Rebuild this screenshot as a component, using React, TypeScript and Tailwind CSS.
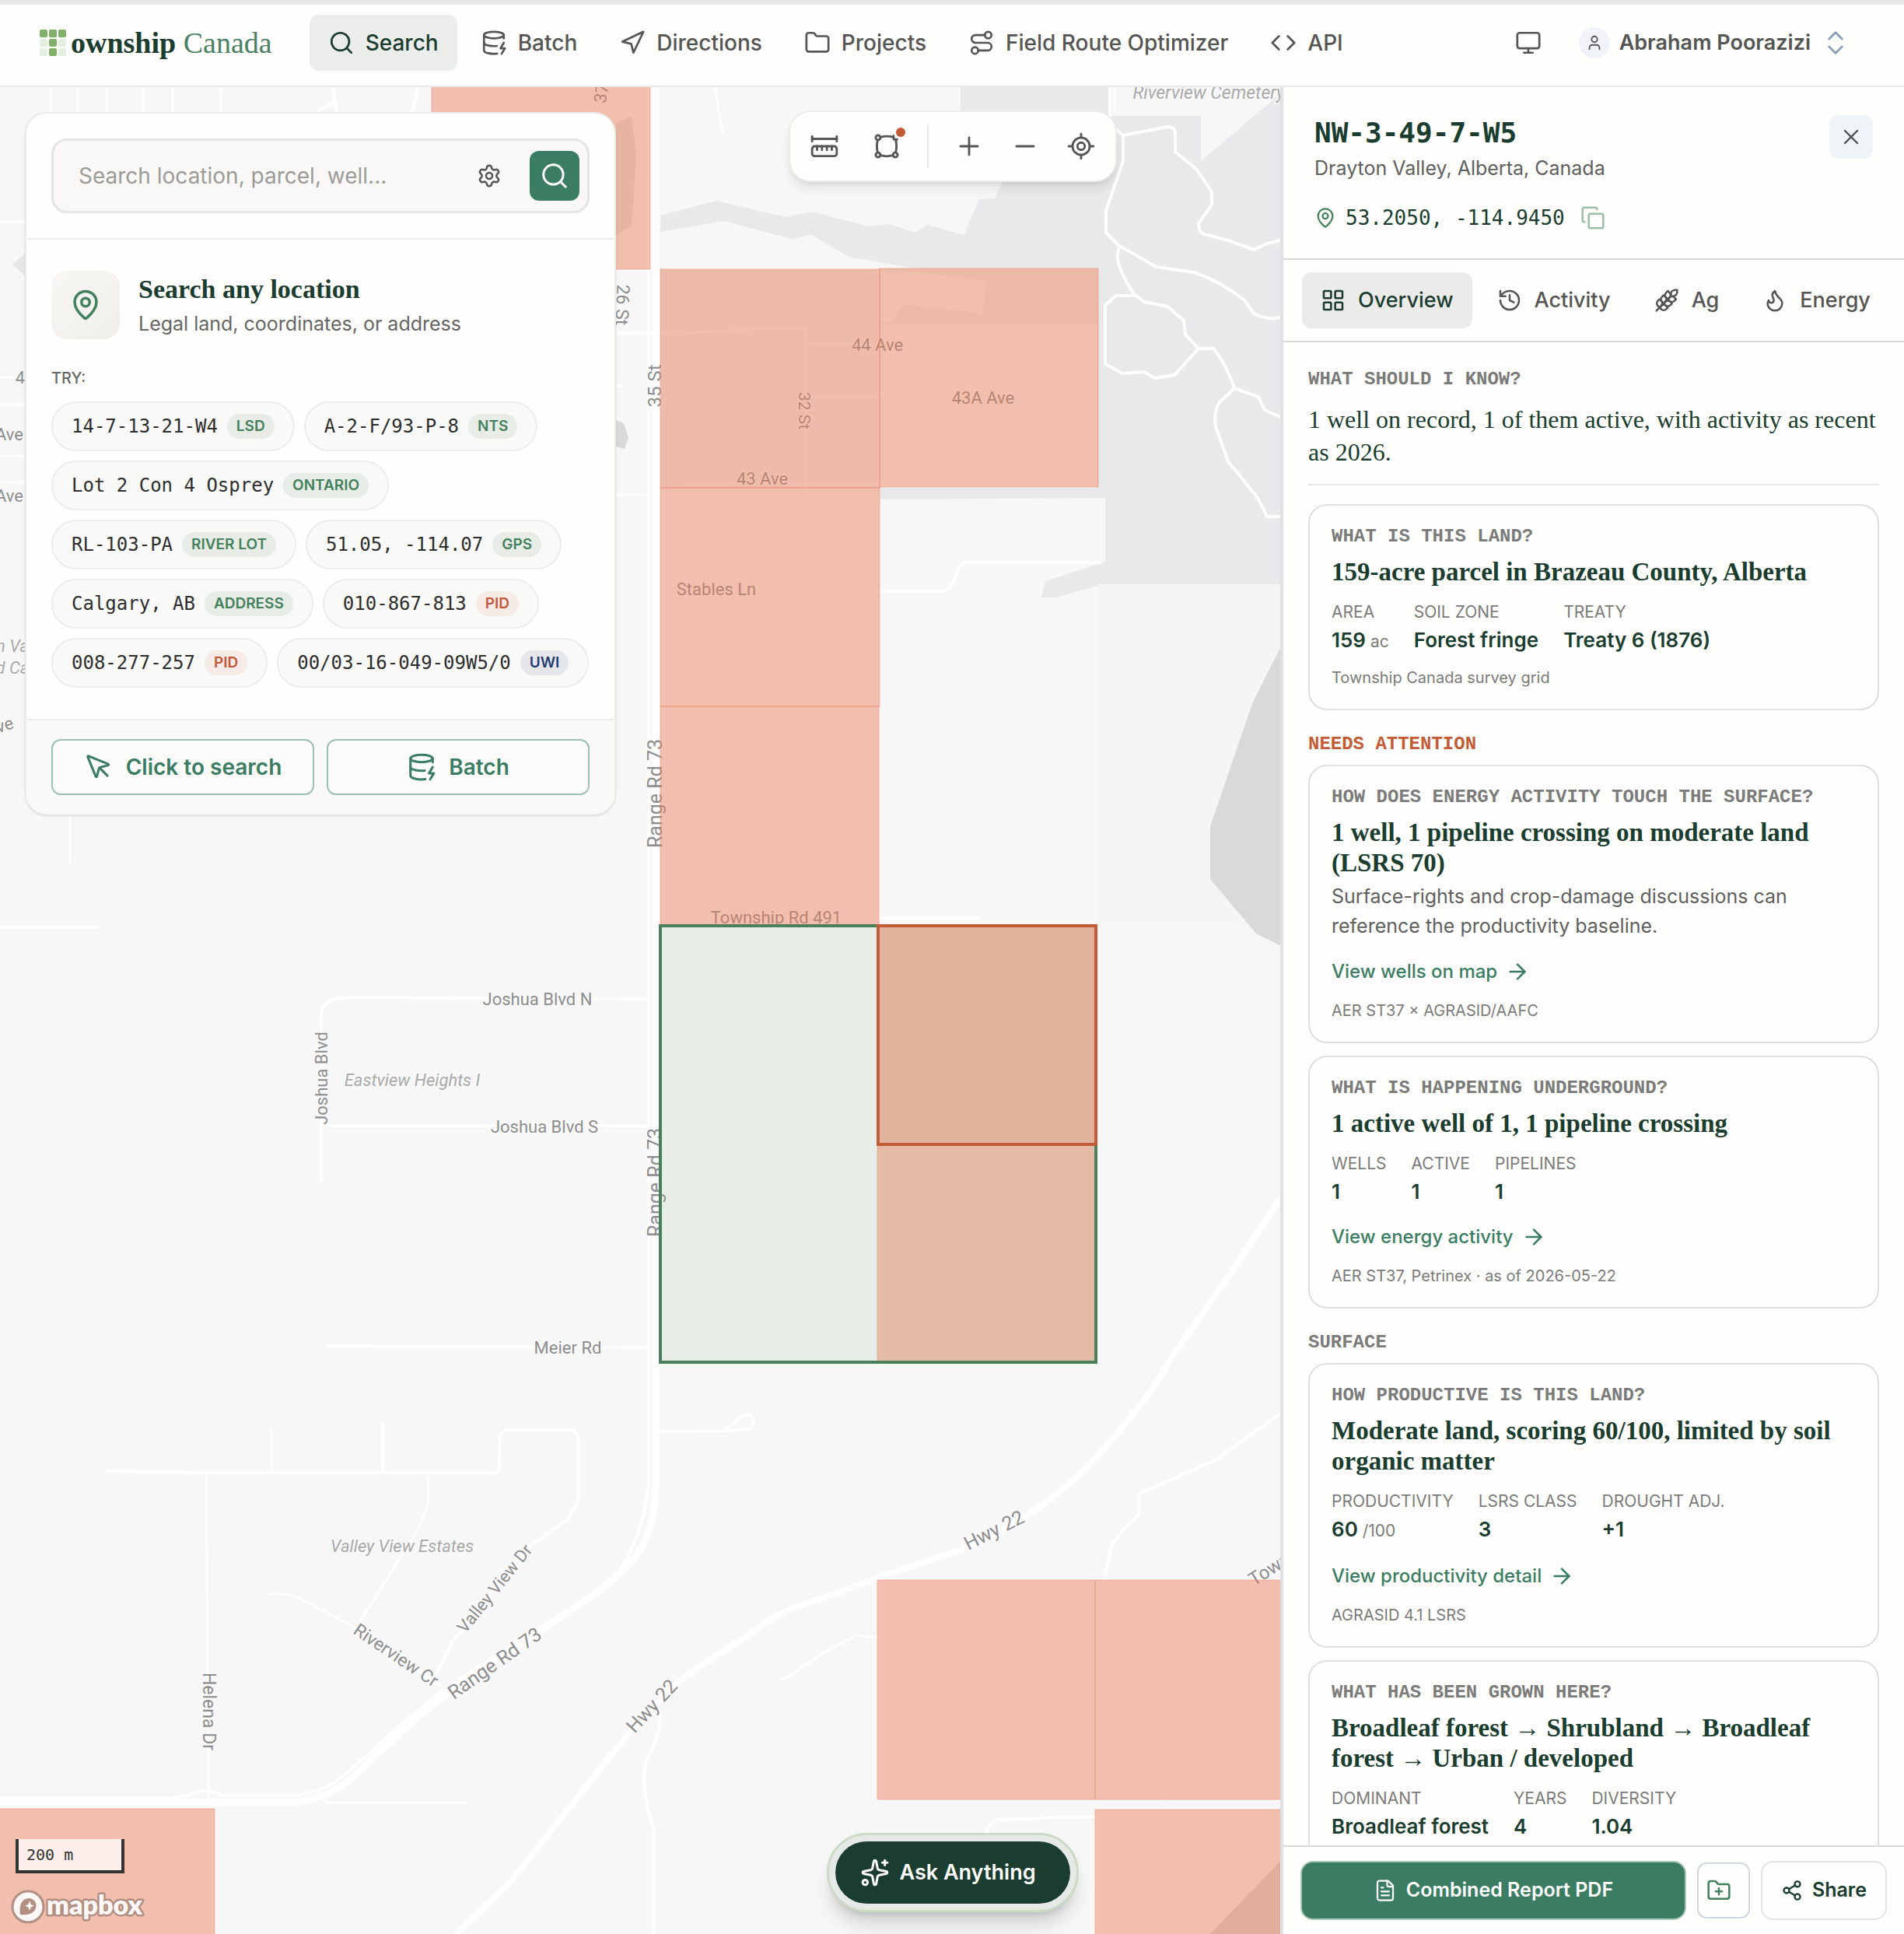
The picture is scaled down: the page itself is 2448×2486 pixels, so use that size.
import { useState } from "react";
import type { ReactNode } from "react";
import {
  ArrowRight,
  ChevronsUpDown,
  Code,
  Copy,
  DatabaseZap,
  FileText,
  Flame,
  Folder,
  FolderPlus,
  History,
  LayoutGrid,
  LocateFixed,
  MapPin,
  Minus,
  Monitor,
  MousePointer,
  Navigation,
  Plus,
  Route,
  RulerDimensionLine,
  Search,
  Settings,
  Share2,
  Sparkles,
  User,
  Wheat,
  X,
} from "lucide-react";
import type { LucideIcon } from "lucide-react";

const SERIF = "font-['Liberation_Serif',serif]";
const MONO = "font-['DejaVu_Sans_Mono',monospace]";
const LABEL =
  "font-['Liberation_Mono',monospace] text-[24px] leading-8 font-bold uppercase";

const NAV: { label: string; icon: LucideIcon }[] = [
  { label: "Search", icon: Search },
  { label: "Batch", icon: DatabaseZap },
  { label: "Directions", icon: Navigation },
  { label: "Projects", icon: Folder },
  { label: "Field Route Optimizer", icon: Route },
  { label: "API", icon: Code },
];

const TABS: { label: string; icon: LucideIcon }[] = [
  { label: "Overview", icon: LayoutGrid },
  { label: "Activity", icon: History },
  { label: "Ag", icon: Wheat },
  { label: "Energy", icon: Flame },
];

const TONES = {
  green: "bg-[#e8ece6] text-[#43805c]",
  orange: "bg-[#f6ebe6] text-[#c5573a]",
  blue: "bg-[#e6e7ea] text-[#1f3a6e]",
};

const EXAMPLES: { text: string; tag: string; tone: keyof typeof TONES }[] = [
  { text: "14-7-13-21-W4", tag: "LSD", tone: "green" },
  { text: "A-2-F/93-P-8", tag: "NTS", tone: "green" },
  { text: "Lot 2 Con 4 Osprey", tag: "ONTARIO", tone: "green" },
  { text: "RL-103-PA", tag: "RIVER LOT", tone: "green" },
  { text: "51.05, -114.07", tag: "GPS", tone: "green" },
  { text: "Calgary, AB", tag: "ADDRESS", tone: "green" },
  { text: "010-867-813", tag: "PID", tone: "orange" },
  { text: "008-277-257", tag: "PID", tone: "orange" },
  { text: "00/03-16-049-09W5/0", tag: "UWI", tone: "blue" },
];

const Logo = () => {
  const on = [0, 1, 2, 4, 7];
  return (
    <a href="#" className="flex items-center gap-1.5">
      <svg width="34" height="34" viewBox="0 0 34 34" aria-hidden="true">
        {Array.from({ length: 9 }, (_, i) => (
          <rect
            key={i}
            x={(i % 3) * 12}
            y={Math.floor(i / 3) * 12}
            width="10"
            height="10"
            rx="2"
            fill={on.includes(i) ? "#80b069" : "#e5efe0"}
          />
        ))}
      </svg>
      <span className={`${SERIF} text-[38px] leading-10 text-[#4a8064]`}>
        <b className="text-[#1b3d2f]">ownship</b> Canada
      </span>
    </a>
  );
};

const Header = () => (
  <header className="flex h-[106px] shrink-0 items-center border-b-2 border-[#e6e7e7] bg-[#fefefc] pr-[68px] pb-1.5 pl-[51px]">
    <Logo />
    <nav className="ml-12 flex items-center gap-1.5">
      {NAV.map(({ label, icon: Icon }, i) => (
        <a
          key={label}
          href="#"
          className={`flex h-[72px] items-center gap-3.5 rounded-xl px-6 text-[28px] font-medium ${
            i === 0 ? "bg-[#ebedeb] text-[#1b3d2f]" : "text-[#555553]"
          }`}
        >
          <Icon size={34} strokeWidth={1.9} />
          {label}
        </a>
      ))}
    </nav>
    <div className="ml-auto flex items-center text-[#555553]">
      <button type="button" aria-label="Display" className="mr-12">
        <Monitor size={34} strokeWidth={1.9} />
      </button>
      <button
        type="button"
        className="flex items-center gap-3 text-[27px] font-semibold"
      >
        <span className="flex size-10 items-center justify-center rounded-full bg-[#f0f4f9]">
          <User size={22} />
        </span>
        Abraham Poorazizi
        <ChevronsUpDown size={40} strokeWidth={1.7} color="#8c9db8" />
      </button>
    </div>
  </header>
);

const ROADS: [string, number][] = [
  // trails in the park
  ["M1435 166L1444 174L1501 163Q1511 163 1511 171V195L1539 218L1558 247V263L1541 287Q1541 299 1548 301L1579 309L1612 321L1629 313L1646 309", 4],
  ["M1444 174V207L1422 271V299L1439 316L1487 343L1535 350Q1570 362 1600 386L1612 403Q1630 412 1646 408", 4],
  ["M1439 319Q1430 336 1458 378L1471 388L1501 394L1522 412L1524 430L1541 448H1560Q1575 465 1587 499L1618 510L1626 527L1646 536", 4],
  ["M1458 380H1435L1421 392V468L1443 480L1471 478L1485 486L1510 482L1541 448", 4],
  ["M1587 499L1568 517Q1560 530 1563 549L1579 593L1617 640L1629 664H1646", 4],
  ["M920 110L923 138L930 173", 3],
  ["M1427 110V150", 4],
  ["M1433 110V143", 2],
  // Range Rd 73 and its frontage
  ["M843 110V1905Q843 1960 823 1992Q800 2030 702 2091L570 2181Q545 2200 527 2216L461 2277Q430 2310 378 2317H0", 9],
  ["M834 110V1905Q828 1975 790 2030L565 2176L520 2213L452 2274Q420 2305 378 2308H285Q265 2296 240 2308L220 2311H0", 4],
  // Hwy 22
  ["M1660 1520L1646 1541L1580 1640L1504 1748Q1480 1792 1452 1823Q1405 1885 1352 1926Q1300 1965 1237 1991L1122 2031L1023 2066Q990 2078 960 2104Q900 2140 871 2163L812 2224L773 2272L658 2417L587 2486", 8],
  // Joshua Blvd, Meier Rd
  ["M413 1518V1302Q415 1282 454 1282L833 1284", 4],
  ["M424 1447H833", 4],
  ["M420 1730L833 1732", 4],
  // Valley View
  ["M137 1891L265 1893H636Q642 1892 642 1885L643 1844L650 1838H732Q743 1840 743 1848V1931L730 1953L680 1988L581 2111L562 2150", 4],
  ["M349 1837V1891", 3],
  ["M492 1831V1891", 4],
  ["M265 1894L267 2145L268 2310", 3],
  ["M550 1894L551 1927Q545 1955 532 1975L463 2084", 3],
  ["M346 2049Q370 2048 384 2054L455 2091L565 2167", 3],
  ["M411 2310L420 2317H598", 3],
  ["M845 2190Q852 2220 840 2245Q826 2270 828 2290Q832 2330 841 2351V2486", 4],
  // eastern side roads
  ["M1645 1818L1562 1877L1465 1920V1946Q1430 1980 1428 1991L1420 2031", 4],
  ["M1128 2105L1101 2102L1070 2118L1007 2159", 3],
  ["M840 1840L934 1839L965 1837Q974 1826 963 1818Q955 1818 934 1837", 4],
  ["M1269 2380V2350L1282 2339L1407 2335", 4],
  ["M1131 760H1210Q1222 758 1227 746Q1232 726 1240 723H1414", 4],
  ["M1131 1180H1260", 4],
  // town streets
  ["M790 428H849", 4],
  ["M790 496H802M790 636H837", 3],
  ["M65 112V150M100 112V150M137 112V150M184 112V150M222 112V150M278 112L284 112V150", 3],
  ["M380 162L430 130M538 112L528 150M428 112L434 150", 4],
  ["M0 285H33M0 485H33M0 520H33M0 586H33M0 620H33", 3],
  ["M90 1040V1110M0 1192H130", 3],
];

const FAINT_STREETS = [
  "M849 428H880L970 423H1036V746",
  "M1036 442H1230Q1256 452 1253 510",
  "M1036 511H1253",
  "M880 622H1400",
  "M849 760H1131",
  "M1420 2040Q1450 2160 1500 2313",
];

const PARCELS = [
  [555, 100, 281, 246],
  [849, 346, 282, 281],
  [1131, 345, 281, 281],
  [849, 627, 282, 281],
  [849, 908, 281, 281],
  [1128, 1189, 281, 282],
  [1128, 1471, 281, 280],
  [1128, 2031, 280, 282],
  [1408, 2031, 400, 282],
  [1408, 2326, 400, 400],
  [-10, 2325, 286, 400],
];

interface MapLabelProps {
  x: number;
  y: number;
  size?: number;
  turn?: number;
  place?: boolean;
  children: string;
}

const MapLabel = ({ x, y, size = 22, turn = 0, place, children }: MapLabelProps) => (
  <text
    x={x}
    y={y}
    fontSize={size}
    fontStyle={place ? "italic" : undefined}
    fill={place ? "#a9a9a9" : "#8d8d8d"}
    stroke="#f9f9f9"
    strokeWidth="3"
    paintOrder="stroke"
    textAnchor="middle"
    dominantBaseline="central"
    transform={`rotate(${turn} ${x} ${y})`}
  >
    {children}
  </text>
);

const MapCanvas = () => (
  <svg
    className="absolute inset-0 h-full w-full bg-[#f7f7f7] font-['Roboto',sans-serif]"
    aria-hidden="true"
  >
    <g transform="translate(0 -112)">
      <path
        fill="#e9e9eb"
        d="M1235 100H1427V149H1544V207L1634 131L1660 105V751H1418L1357 768H1339L1344 747L1421 722V640L1131 642V627H1411V345H1174L1091 330L1044 302L1017 307L931 284L849 298V277L921 258L1010 279L1044 272L1116 291L1143 288L1177 299L1192 289L1239 302L1259 256L1279 255L1289 235L1235 150Z"
      />
      <path fill="#eeeeef" d="M1131 345H1411V416H1131Z" />
      <path fill="#f7f7f7" d="M1149 414L1161 391L1200 396L1264 403L1268 361L1180 350H1131V414Z" />
      <path fill="#f0f0f2" d="M849 346H1131V627H849Z" />
      <path fill="#f5f5f5" d="M1411 751H1660V1190H1411Z" />
      <path
        fill="#d9d9d9"
        d="M1660 808L1646 833L1611 902L1556 1062V1130L1615 1200L1660 1222ZM792 540L802 544L808 562L803 577L792 574Z"
      />
      <path fill="#d9d9d9" d="M1660 2378L1556 2486H1660Z" />
      <path fill="#e4e4e6" d="M792 158L812 150L818 200L812 290L792 302Z" />
      <path fill="#e6e6e8" d="M16 340L33 325V355Z" />
      {FAINT_STREETS.map((d) => (
        <path key={d} d={d} fill="none" stroke="#fbfbfb" strokeWidth="3" strokeOpacity="0.6" />
      ))}
      {ROADS.map(([d, width]) => (
        <path
          key={d}
          d={d}
          fill="none"
          stroke="#fefefe"
          strokeWidth={width}
          strokeLinecap="round"
          strokeLinejoin="round"
        />
      ))}

      <MapLabel x={773} y={120} turn={-82}>37</MapLabel>
      <MapLabel x={800} y={392} size={23} turn={92}>26 St</MapLabel>
      <MapLabel x={842} y={496} size={24} turn={-90}>35 St</MapLabel>
      <MapLabel x={1034} y={528} size={21} turn={90}>32 St</MapLabel>
      <MapLabel x={1128} y={443}>44 Ave</MapLabel>
      <MapLabel x={1264} y={511}>43A Ave</MapLabel>
      <MapLabel x={980} y={615}>43 Ave</MapLabel>
      <MapLabel x={921} y={757}>Stables Ln</MapLabel>
      <MapLabel x={842} y={1020} size={25} turn={-90}>Range Rd 73</MapLabel>
      <MapLabel x={998} y={1179}>Township Rd 491</MapLabel>
      <MapLabel x={842} y={1520} size={25} turn={-90}>Range Rd 73</MapLabel>
      <MapLabel x={691} y={1284}>Joshua Blvd N</MapLabel>
      <MapLabel x={413} y={1386} turn={-90}>Joshua Blvd</MapLabel>
      <MapLabel x={530} y={1388} place>Eastview Heights I</MapLabel>
      <MapLabel x={700} y={1448}>Joshua Blvd S</MapLabel>
      <MapLabel x={730} y={1732}>Meier Rd</MapLabel>
      <MapLabel x={517} y={1987} place>Valley View Estates</MapLabel>
      <MapLabel x={636} y={2042} turn={-51}>Valley View Dr</MapLabel>
      <MapLabel x={509} y={2128} size={23} turn={34}>Riverview Cr</MapLabel>
      <MapLabel x={636} y={2138} size={25} turn={-35}>Range Rd 73</MapLabel>
      <MapLabel x={268} y={2200} size={23} turn={90}>Helena Dr</MapLabel>
      <MapLabel x={1278} y={1967} size={25} turn={-27}>Hwy 22</MapLabel>
      <MapLabel x={838} y={2193} size={25} turn={-47}>Hwy 22</MapLabel>
      <MapLabel x={1666} y={1996} size={24} turn={-32}>Township Rd</MapLabel>
      <MapLabel x={1554} y={119} size={23} place>Riverview Cemetery</MapLabel>
      <MapLabel x={26} y={485}>4</MapLabel>
      <MapLabel x={12} y={558}>Ave</MapLabel>
      <MapLabel x={12} y={637}>Ave</MapLabel>
      <MapLabel x={16} y={830} place>n Va</MapLabel>
      <MapLabel x={16} y={858} place>d Ca</MapLabel>
      <MapLabel x={6} y={932} turn={-18}>ve</MapLabel>

      {PARCELS.map(([x, y, w, h]) => (
        <rect
          key={`${x}-${y}`}
          x={x}
          y={y}
          width={w}
          height={h}
          fill="#ec7a55"
          fillOpacity="0.45"
          stroke="#ec8468"
          strokeOpacity="0.5"
        />
      ))}
      <rect x="849" y="1190" width="560" height="561" fill="#6ba761" fillOpacity="0.1" stroke="#4b805c" strokeWidth="4" />
      <rect x="1129" y="1190" width="280" height="281" fill="#c45b37" fillOpacity="0.1" stroke="#c45b37" strokeWidth="4" />
    </g>
  </svg>
);

const SearchCard = () => {
  const [query, setQuery] = useState("");

  return (
    <section className="mt-8 ml-8 w-[760px] shrink-0 overflow-hidden rounded-[28px] border-2 border-[#ececea] bg-[#fefefd] shadow-sm">
      <form
        className="border-b-2 border-[#ececea] p-8"
        onSubmit={(e) => e.preventDefault()}
      >
        <div className="flex h-24 items-center rounded-[20px] border-[3px] border-[#e5e5e2] bg-[#f9f8f6] pr-2.5 pl-8">
          <input
            type="text"
            aria-label="Search location, parcel, well"
            placeholder="Search location, parcel, well..."
            value={query}
            onChange={(e) => setQuery(e.target.value)}
            className="min-w-0 flex-1 bg-transparent text-[28px] text-[#2e2e2e] outline-none placeholder:text-[#9b9b98]"
          />
          <button type="button" aria-label="Settings" className="mr-9 text-[#555553]">
            <Settings size={32} strokeWidth={1.9} />
          </button>
          <button
            type="submit"
            aria-label="Search"
            className="flex size-16 items-center justify-center rounded-xl bg-[#3b7d62] text-white"
          >
            <Search size={38} strokeWidth={1.9} />
          </button>
        </div>
      </form>

      <div className="px-8 py-10">
        <div className="flex items-center gap-6">
          <div className="flex size-[88px] items-center justify-center rounded-[20px] bg-linear-to-br from-[#f8f7f4] to-[#f0eeea] text-[#43805c]">
            <MapPin size={42} strokeWidth={2} />
          </div>
          <div className="pt-1">
            <h2 className={`${SERIF} text-[34px] leading-10 font-bold text-[#1b3d2f]`}>
              Search any location
            </h2>
            <p className="mt-1 text-[25px] leading-10 text-[#666664]">
              Legal land, coordinates, or address
            </p>
          </div>
        </div>

        <p className="mt-9 text-[20px] leading-7 font-medium text-[#666664]">TRY:</p>
        <div className="mt-4 flex flex-wrap gap-3">
          {EXAMPLES.map(({ text, tag, tone }) => (
            <button
              key={text}
              type="button"
              onClick={() => setQuery(text)}
              className="flex h-16 items-center gap-3 rounded-full border-2 border-[#ececea] bg-[#f9f9f7] px-6"
            >
              <span className={`${MONO} text-[24px] text-[#2e2e2e]`}>{text}</span>
              <span
                className={`flex h-8 items-center rounded-full px-3 text-[19px] font-semibold ${TONES[tone]}`}
              >
                {tag}
              </span>
            </button>
          ))}
        </div>
      </div>

      <div className="grid grid-cols-2 gap-4 border-t-2 border-[#ececea] bg-[#f9f9f7] px-8 py-6">
        <button
          type="button"
          className="flex h-[72px] items-center justify-center gap-4 rounded-xl border-2 border-[#9dbfaf] bg-[#fbfbf9] text-[28px] font-semibold text-[#3b7d62]"
        >
          <MousePointer size={38} strokeWidth={1.9} />
          Click to search
        </button>
        <button
          type="button"
          className="flex h-[72px] items-center justify-center gap-4 rounded-xl border-2 border-[#9dbfaf] bg-[#fbfbf9] text-[28px] font-semibold text-[#3b7d62]"
        >
          <DatabaseZap size={38} strokeWidth={1.9} />
          Batch
        </button>
      </div>
    </section>
  );
};

const AreaIcon = () => (
  <svg
    width="38"
    height="38"
    viewBox="0 0 24 24"
    fill="none"
    stroke="currentColor"
    strokeWidth="1.8"
    strokeLinecap="round"
    strokeLinejoin="round"
    aria-hidden="true"
  >
    <circle cx="5" cy="5" r="1.9" />
    <circle cx="5" cy="19" r="1.9" />
    <circle cx="19" cy="19" r="1.9" />
    <path d="M17.6 3.6v2.2a.7.7 0 0 0 .7.7h2.1" />
    <path d="M7 4.6Q12 3.2 17.4 4.6" />
    <path d="M4.7 7Q3.4 12 4.7 17" />
    <path d="M7 19.4Q12 20.8 17 19.4" />
    <path d="M19.3 17Q20.6 12 19.4 7" />
  </svg>
);

interface ToolProps {
  label: string;
  badge?: boolean;
  children: ReactNode;
}

const Tool = ({ label, badge, children }: ToolProps) => (
  <button
    type="button"
    aria-label={label}
    className="relative flex size-[72px] items-center justify-center"
  >
    {children}
    {badge && (
      <span className="absolute top-3 right-3 size-3 rounded-full bg-[#c45b37]" />
    )}
  </button>
);

const Toolbar = () => (
  <div className="flex items-center rounded-[28px] border-2 border-[#ececea] bg-[#fefefd] p-2 text-[#555553] shadow-lg shadow-black/10">
    <Tool label="Measure">
      <RulerDimensionLine size={38} strokeWidth={1.8} />
    </Tool>
    <div className="ml-2">
      <Tool label="Draw area" badge>
        <AreaIcon />
      </Tool>
    </div>
    <div className="mx-4 h-14 w-0.5 bg-[#e6e6e4]" />
    <Tool label="Zoom in">
      <Plus size={38} strokeWidth={1.8} />
    </Tool>
    <Tool label="Zoom out">
      <Minus size={38} strokeWidth={1.8} />
    </Tool>
    <Tool label="Locate">
      <LocateFixed size={38} strokeWidth={1.8} />
    </Tool>
  </div>
);

const Mapbox = () => (
  <svg width="190" height="46" viewBox="0 0 190 46" aria-hidden="true">
    <circle cx="24" cy="23" r="20" fill="#fdf8f6" stroke="#b28f82" strokeWidth="3" />
    <path
      d="M14 33C12 21 16 12 26 12a9.500 9.500 0 0 1 8.500 9.500C34.500 31 24 34.500 14 33Z"
      fill="#b28f82"
    />
    <path d="M26 15.500L27.800 20L32 21.800L27.800 23.500L26 28L24.200 23.500L20 21.800L24.200 20Z" fill="#fdf8f6" />
    <text
      x="48"
      y="33"
      fontSize="34"
      fontWeight="800"
      fill="#fdf8f6"
      stroke="#b28f82"
      strokeWidth="5"
      strokeLinejoin="round"
      paintOrder="stroke"
      className="font-['Lato',sans-serif]"
    >
      mapbox
    </text>
  </svg>
);

interface Stat {
  label: string;
  value: string;
  unit?: string;
}

interface InsightProps {
  question: string;
  title: string;
  description?: string;
  stats?: Stat[];
  link?: string;
  source?: string;
}

const Insight = ({ question, title, description, stats, link, source }: InsightProps) => (
  <article className="rounded-3xl border-2 border-[#dededd] px-7 pt-6 pb-6.5">
    <h3 className={`${LABEL} text-[#7b7b79]`}>{question}</h3>
    <p className={`${SERIF} mt-2.5 text-[33px] leading-[39px] font-bold text-[#1b3d2f]`}>
      {title}
    </p>
    {description && (
      <p className="mt-1 pb-0.5 text-[25px] leading-[38px] text-[#60605e]">
        {description}
      </p>
    )}
    {stats && (
      <dl className="mt-4.5 flex gap-8 pb-0.5">
        {stats.map(({ label, value, unit }) => (
          <div key={label}>
            <dt className="text-[21px] leading-7 text-[#7b7b79] uppercase">{label}</dt>
            <dd className="mt-1 text-[26px] leading-9 font-semibold text-[#1b3d2f]">
              {value}
              {unit && (
                <span className="text-[21px] font-normal text-[#7b7b79]"> {unit}</span>
              )}
            </dd>
          </div>
        ))}
      </dl>
    )}
    {link && (
      <a
        href="#"
        className="mt-5.5 flex items-center gap-2.5 text-[24px] leading-8 font-medium text-[#3b7d62]"
      >
        {link}
        <ArrowRight size={32} strokeWidth={1.9} />
      </a>
    )}
    {source && (
      <p className={`text-[20px] leading-7 text-[#7b7b79] ${link ? "mt-5" : "mt-3"}`}>
        {source}
      </p>
    )}
  </article>
);

const ParcelPanel = () => (
  <aside className="flex w-[802px] shrink-0 flex-col border-l-4 border-[#dfe1e4] bg-[#fefefd]">
    <div className="flex items-start justify-between border-b-2 border-[#dadad9] px-10 pt-9 pb-8.5">
      <div>
        <h1 className={`${MONO} text-[36px] leading-[46px] font-bold text-[#1b3d2f]`}>
          NW-3-49-7-W5
        </h1>
        <p className="mt-1 text-[25px] leading-9 text-[#60605e]">
          Drayton Valley, Alberta, Canada
        </p>
        <div className="mt-7 flex h-9 items-center">
          <MapPin size={28} strokeWidth={1.9} className="text-[#43805c]" />
          <span className={`${MONO} ml-3 text-[26px] text-[#1b3d2f]`}>
            53.2050, -114.9450
          </span>
          <button type="button" aria-label="Copy coordinates" className="ml-5 text-[#9dbfaa]">
            <Copy size={32} strokeWidth={1.9} />
          </button>
        </div>
      </div>
      <button
        type="button"
        aria-label="Close"
        className="flex size-14 items-center justify-center rounded-xl bg-[#eff4f8] text-[#4b4b4a]"
      >
        <X size={32} strokeWidth={1.7} />
      </button>
    </div>

    <nav className="flex gap-2 border-b-2 border-[#dadad9] px-6 py-4">
      {TABS.map(({ label, icon: Icon }, i) => (
        <button
          key={label}
          type="button"
          className={`flex h-[72px] items-center gap-4 rounded-xl px-6 text-[27px] font-medium ${
            i === 0 ? "bg-[#ebebe9] text-[#1b3d2f]" : "text-[#555553]"
          }`}
        >
          <Icon size={32} strokeWidth={1.9} />
          {label}
        </button>
      ))}
    </nav>

    <div className="min-h-0 flex-1 overflow-y-auto px-8 pt-8 [scrollbar-width:none]">
      <h2 className={`${LABEL} text-[#7b7b79]`}>What should I know?</h2>
      <p
        className={`${SERIF} mt-3.5 border-b-2 border-[#e6e6e5] pb-5 text-[32px] leading-[42px] text-[#1b3d2f]`}
      >
        1 well on record, 1 of them active, with activity as recent as 2026.
      </p>

      <div className="mt-6">
        <Insight
          question="What is this land?"
          title="159-acre parcel in Brazeau County, Alberta"
          stats={[
            { label: "Area", value: "159", unit: "ac" },
            { label: "Soil zone", value: "Forest fringe" },
            { label: "Treaty", value: "Treaty 6 (1876)" },
          ]}
          source="Township Canada survey grid"
        />
      </div>

      <h2 className={`${LABEL} mt-7 mb-2.5 text-[#c45b37]`}>Needs attention</h2>
      <div className="flex flex-col gap-4">
        <Insight
          question="How does energy activity touch the surface?"
          title="1 well, 1 pipeline crossing on moderate land (LSRS 70)"
          description="Surface-rights and crop-damage discussions can reference the productivity baseline."
          link="View wells on map"
          source="AER ST37 × AGRASID/AAFC"
        />
        <Insight
          question="What is happening underground?"
          title="1 active well of 1, 1 pipeline crossing"
          stats={[
            { label: "Wells", value: "1" },
            { label: "Active", value: "1" },
            { label: "Pipelines", value: "1" },
          ]}
          link="View energy activity"
          source="AER ST37, Petrinex · as of 2026-05-22"
        />
      </div>

      <h2 className={`${LABEL} mt-7 mb-2.5 text-[#7b7b79]`}>Surface</h2>
      <div className="flex flex-col gap-4">
        <Insight
          question="How productive is this land?"
          title="Moderate land, scoring 60/100, limited by soil organic matter"
          stats={[
            { label: "Productivity", value: "60", unit: "/100" },
            { label: "LSRS class", value: "3" },
            { label: "Drought adj.", value: "+1" },
          ]}
          link="View productivity detail"
          source="AGRASID 4.1 LSRS"
        />
        <Insight
          question="What has been grown here?"
          title="Broadleaf forest → Shrubland → Broadleaf forest → Urban / developed"
          stats={[
            { label: "Dominant", value: "Broadleaf forest" },
            { label: "Years", value: "4" },
            { label: "Diversity", value: "1.04" },
          ]}
        />
      </div>
    </div>

    <div className="flex items-center gap-3.5 border-t-2 border-[#dadad9] px-[22px] py-[18px] text-[25px] font-semibold">
      <button
        type="button"
        className="flex h-[76px] flex-1 items-center justify-center gap-3 rounded-2xl border-2 border-[#a9c7b8] bg-[#3b7d62] text-white"
      >
        <FileText size={30} strokeWidth={1.8} />
        Combined Report PDF
      </button>
      <button
        type="button"
        aria-label="Add to project"
        className="flex h-[72px] w-[68px] items-center rounded-xl border-2 border-[#ced6e2] pl-2.5 text-[#43805c]"
      >
        <FolderPlus size={32} strokeWidth={1.9} />
      </button>
      <button
        type="button"
        className="flex h-[76px] items-center gap-3 rounded-2xl border-2 border-[#e4e4e2] px-6 text-[#1b3d2f]"
      >
        <Share2 size={28} strokeWidth={2} />
        Share
      </button>
    </div>
  </aside>
);

export default function App() {
  return (
    <div className="flex h-screen flex-col overflow-hidden bg-[#fefefc] font-['Inter',sans-serif]">
      <div className="h-1.5 shrink-0 bg-[#e8e7e5]" />
      <Header />
      <div className="flex min-h-0 flex-1">
        <main className="relative min-w-0 flex-1 overflow-hidden">
          <MapCanvas />
          <div className="relative flex h-full items-start">
            <SearchCard />
            <div className="ml-3 flex h-full flex-1 flex-col items-center justify-between pt-[30px] pb-7">
              <Toolbar />
              <div className="rounded-full border-[3px] border-[#cbdac5] bg-[#e6eae6] p-2 shadow-xl shadow-black/15">
                <button
                  type="button"
                  className="flex h-20 items-center gap-3 rounded-full bg-[#1b3d2f] pr-11 pl-8 text-[27px] font-semibold text-white"
                >
                  <Sparkles size={38} strokeWidth={1.9} />
                  Ask Anything
                </button>
              </div>
            </div>
          </div>
          <div className="absolute bottom-3 left-3">
            <div
              className={`${MONO} ml-2 flex h-11 w-[140px] items-center border-4 border-t-0 border-[#333] bg-white/75 px-2.5 text-[20px] text-[#333]`}
            >
              200 m
            </div>
            <div className="mt-5">
              <Mapbox />
            </div>
          </div>
        </main>
        <ParcelPanel />
      </div>
    </div>
  );
}
